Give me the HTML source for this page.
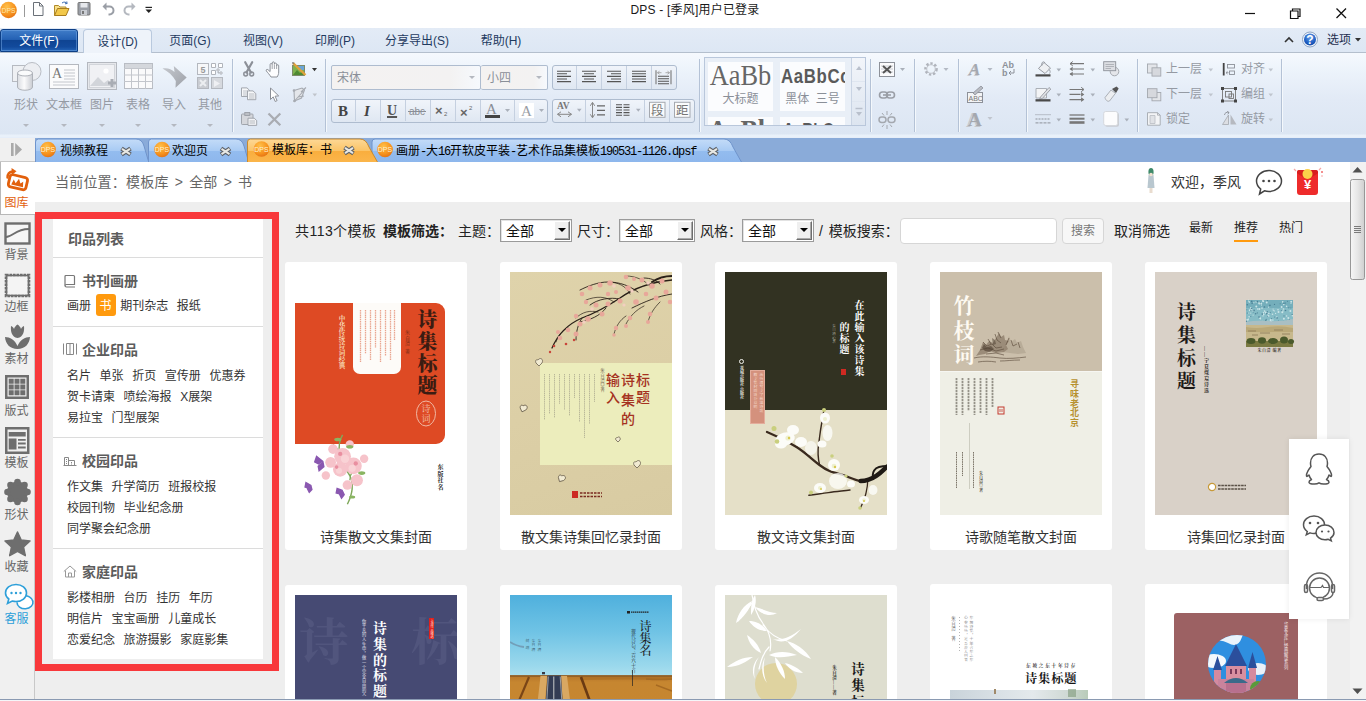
<!DOCTYPE html>
<html lang="zh-CN">
<head>
<meta charset="utf-8">
<title>DPS</title>
<style>
*{box-sizing:border-box;margin:0;padding:0}
html,body{width:1366px;height:701px;overflow:hidden;background:#fff}
body{font-family:"Liberation Sans","Noto Sans CJK SC",sans-serif;font-size:13px;color:#222;position:relative}
.abs{position:absolute}
svg{display:block;overflow:visible}
i{font-style:normal}
/* title bar */
#title{position:absolute;left:0;top:0;width:1366px;height:28px;background:#fff}
#title .cap{position:absolute;left:0;width:1390px;top:1px;text-align:center;font-size:12px;letter-spacing:0.200px;line-height:18px;color:#1a1a1a}
/* menu */
#menu{position:absolute;left:0;top:28px;width:1366px;height:25px;background:linear-gradient(#e3ebf6,#dde7f4);border-bottom:1px solid #b4bfcd}
#menu .mi{position:absolute;top:0;height:24px;line-height:27px;font-size:12px;color:#1f3a5f;text-align:center}
#menu .file{left:0;top:1px;width:78px;height:23px;background:linear-gradient(#3f7cc8,#2461b4 45%,#0f4492 50%,#124a9c 80%,#2363b6);color:#fff;border:1px solid #0d3f86;box-shadow:inset 0 0 0 1px rgba(120,170,230,0.500);border-radius:3px 3px 0 0;line-height:22px}
#menu .act{left:83px;top:1px;width:69px;height:25px;background:#eef3fa;border:1px solid #b9c9de;border-bottom:none;border-radius:4px 4px 0 0;line-height:25px;color:#1f3a5f}
/* ribbon */
#ribbon{position:absolute;left:0;top:53px;width:1366px;height:84px;background:linear-gradient(#f5f9fe 0,#ebf2fa 25%,#e2eaf6 55%,#dce6f3 96%,#e9f1fa 98%)}
.sep{position:absolute;top:6px;width:1px;height:73px;background:#b4c2d6;box-shadow:1px 0 0 #f4f8fc}
.big{position:absolute;top:0;width:42px;height:84px}
.big .bi{position:absolute}
.big span{position:absolute;left:-6px;width:54px;top:43px;text-align:center;font-size:12px;line-height:18px;color:#959aa3;white-space:nowrap}
.big i{position:absolute;left:18px;top:71px;width:0;height:0;border:3px solid transparent;border-top:3px solid #b4b8c0;border-bottom:none}
.combo{position:absolute;height:25px;border:1px solid #aebccf;background:linear-gradient(90deg,#f4f2f1 0%,#f3f2f2 80%,#f6f9fd 100%);border-radius:2px}
.combo b{position:absolute;top:0;font-weight:normal;font-size:12px;line-height:24px;color:#8a8f98}
.combo .dd{position:absolute;top:10px;width:0;height:0;border:3px solid transparent;border-top:3px solid #b4b8c0;border-bottom:none}
.grp{position:absolute;height:24px;border:1px solid #aebccf;border-radius:3px;background:linear-gradient(#f0f4fa,#dfe7f2);overflow:hidden}
.grp svg{position:absolute;left:-1px;top:-1px}
.gallery{position:absolute;border:1px solid #b9c7db;background:#e9eff7;overflow:hidden}
.gi{position:absolute;top:4px;height:49px;background:#fbfcfe;overflow:hidden}
.gi2{position:absolute;height:20px;background:#fbfcfe}
.gi em,.gi2 em{position:absolute;left:0;right:0;text-align:center;font-style:normal;color:#666;line-height:30px;white-space:nowrap;overflow:hidden}
.gi u{position:absolute;left:0;right:0;top:28px;text-align:center;text-decoration:none;font-size:12px;line-height:18px;color:#8a8f98;white-space:nowrap}
.gs{position:absolute;right:0;top:0;width:14px;height:67px;background:linear-gradient(#f2f5fa,#dde5f0);border-left:1px solid #c9d4e4}
.rt{position:absolute;font-size:12px;line-height:18px;color:#959aa3;white-space:nowrap}
/* doc tabs */
#tabs{position:absolute;left:0;top:137px;width:1366px;height:25px;background:#8aabd9}
.tt{position:absolute;top:6px;font-size:12px;line-height:18px;color:#000;white-space:nowrap;font-family:"Liberation Mono","Noto Sans CJK SC",monospace}
.tt i{font-size:12px;letter-spacing:-1.200px}
/* sidebar */
#side{position:absolute;left:0;top:162px;width:35px;height:538px;background:#f0f0f0;border-right:1px solid #c8c8c8}
.sact{position:absolute;left:0;top:0;width:36px;height:53px;background:#fff;border:1px solid #b8b8b8;border-right:none;border-top:none}
.sl{position:absolute;left:-1px;width:35px;text-align:center;font-size:12px;line-height:18px;color:#666;white-space:nowrap}
/* content */
#content{position:absolute;left:35px;top:162px;width:1315px;height:538px;background:#eee;overflow:hidden}
#chead{position:absolute;left:0;top:0;width:1315px;height:40px;background:#fff}
.crumb{position:absolute;left:20px;top:10px;font-size:14px;line-height:20px;color:#666;letter-spacing:0.200px;word-spacing:2px}
.welcome{position:absolute;left:1136px;top:10px;font-size:14px;line-height:20px;color:#333}
#redbox{position:absolute;left:0;top:50px;width:244px;height:459px;border:7px solid #f8383b}
#lpanel{position:absolute;left:18px;top:58px;width:210px;height:439px;background:#fff;box-shadow:0 -1px 0 #fff}
.lh{position:absolute;left:15px;top:11px;font-size:14px;font-weight:bold;line-height:20px;color:#5c5c5c}
.ld{position:absolute;left:0;width:210px;height:1px;background:#dcdcdc}
.lt{position:absolute;left:29px;font-size:14px;font-weight:bold;line-height:20px;color:#5c5c5c}
.lr{position:absolute;left:10px;height:22px;white-space:nowrap;font-size:0}
.lr a{display:inline-block;height:22px;line-height:25px;padding:0 4px;margin-right:0.600px;font-size:12px;color:#333;border-radius:3px;vertical-align:top}
.lr a.on{background:#ff9a0e;color:#fff}
.fb{position:absolute;top:59px;font-size:14px;line-height:20px;color:#222;white-space:nowrap}
.sel{position:absolute;top:57px;width:72px;height:23px;border:1px solid #9a9a9a;background:#fff;box-shadow:inset 1px 1px 0 #e2e2e2}
.sel span{position:absolute;left:5px;top:1px;font-size:14px;line-height:20px;color:#111}
.sel i{position:absolute;right:1px;top:1px;width:16px;height:19px;background:#efefef;border:1px solid;border-color:#fff #6d6d6d #6d6d6d #fff;box-shadow:inset -1px -1px 0 #a8a8a8}
.sel i:after{content:"";position:absolute;left:3px;top:6px;border:4px solid transparent;border-top:4px solid #000;border-bottom:none}
.sinput{position:absolute;left:865px;top:56px;width:157px;height:26px;border:1px solid #d6d6d6;border-radius:4px;background:#fff}
.sbtn{position:absolute;left:1027px;top:56px;width:42px;height:26px;border:1px solid #d6d6d6;border-radius:4px;background:#f7f7f7;font-size:12px;line-height:25px;text-align:center;color:#777}
.fs{position:absolute;top:57px;font-size:12px;line-height:18px;color:#222;white-space:nowrap}
.fs b{position:absolute;left:0;right:0;top:21px;height:2px;background:#ff9a0e}
.card{position:absolute;width:182px;height:288px;background:#fff;border-radius:3px;overflow:hidden}
.cv{position:absolute;left:10px;top:10px;width:162px;height:243px;overflow:hidden}
.cap2{position:absolute;left:0;width:182px;top:265px;text-align:center;font-size:14px;line-height:20px;color:#333;white-space:nowrap}
.v{position:absolute;writing-mode:vertical-rl;white-space:nowrap;line-height:1}
.sf{font-family:"Liberation Serif","Noto Serif CJK SC",serif}
#float{position:absolute;left:1289px;top:439px;width:60px;height:180px;background:#fff;box-shadow:0 0 6px rgba(0,0,0,0.08)}
#scroll{position:absolute;left:1350px;top:162px;width:16px;height:538px;background:#f2f2f2}
#bottom{position:absolute;left:0;top:699px;width:1366px;height:2px;background:#f4f6f9;border-top:1px solid #8a9ab2}
</style>
</head>
<body>
<div id="title"><div class="cap">DPS - [季风]用户已登录</div>
  <svg class="abs" style="left:0;top:0" width="160" height="22" viewBox="0 0 160 22">
    <defs><radialGradient id="dg" cx="0.4" cy="0.3" r="0.8"><stop offset="0" stop-color="#ffc04a"/><stop offset="0.6" stop-color="#f7931e"/><stop offset="1" stop-color="#e06a10"/></radialGradient></defs>
    <circle cx="8.500" cy="10" r="8.300" fill="url(#dg)"/><text x="8.500" y="13" text-anchor="middle" font-family="Liberation Sans,sans-serif" font-size="6.800" fill="#ffe7ae">DPS</text>
    <path d="M24.500 5v12" stroke="#999"/>
    <path d="M33.500 2.500h6l3.500 3.500v9.500h-9.500z" fill="#fdfdfd" stroke="#6a7078"/><path d="M39.500 2.500v3.500h3.500" fill="none" stroke="#6a7078"/>
    <path d="M54.500 15.500v-10h4l1.500 1.500h6v2" fill="#f8e08a" stroke="#b08a2a"/><path d="M54.500 15.500l3-7h11.500l-3 7z" fill="#f2c84a" stroke="#a87c1e"/><path d="M62 3c2-1.500 4-1 5 0.500M67 3.500l-0.200-2M67 3.500l-2 0.300" stroke="#3a6ab0" fill="none"/>
    <rect x="78" y="2.500" width="12" height="12.500" rx="1" fill="#9a9ea6" stroke="#777"/><rect x="80.500" y="3" width="7" height="4.500" fill="#e6e8ec"/><rect x="81" y="10" width="6" height="5" fill="#c9ccd2"/><rect x="82" y="11" width="2" height="3" fill="#777"/>
    <path d="M104.500 6.500h5a3.500 3.500 0 0 1 0 8h-1" fill="none" stroke="#9a9ea6" stroke-width="2"/><path d="M102.500 6.500l4-4v8z" fill="#9a9ea6"/>
    <path d="M133.500 6.500h-5a3.500 3.500 0 0 0 0 8h1" fill="none" stroke="#b4b8bf" stroke-width="2"/><path d="M135.500 6.500l-4-4v8z" fill="#b4b8bf"/>
    <path d="M145.500 6.800h6.500v1.200h-6.500z" fill="#222"/><path d="M145.500 9.600h6.500l-3.250 3.500z" fill="#222"/>
  </svg>
  <svg class="abs" style="left:1240px;top:4px" width="120" height="20" viewBox="0 0 120 20"><g fill="none" stroke="#111" stroke-width="1.200"><path d="M5 9.500h10"/><path d="M50.500 7h7.500v7.500h-7.500zM52.500 7v-2h7.500v7.500h-2"/><path d="M96.500 4.500l9.500 9.500M106 4.500l-9.500 9.500" stroke-width="1.300"/></g></svg>
</div>
<div id="menu">
  <div class="mi file">文件(F)</div>
  <div class="mi act">设计(D)</div>
  <div class="mi" style="left:158px;width:64px">页面(G)</div>
  <div class="mi" style="left:231px;width:64px">视图(V)</div>
  <div class="mi" style="left:303px;width:64px">印刷(P)</div>
  <div class="mi" style="left:374px;width:86px">分享导出(S)</div>
  <div class="mi" style="left:469px;width:64px">帮助(H)</div>
  <svg class="abs" style="left:1280px;top:2px" width="86" height="20" viewBox="0 0 86 20">
    <defs><radialGradient id="hg" cx="0.5" cy="0.3" r="0.8"><stop offset="0" stop-color="#6aa0e8"/><stop offset="0.6" stop-color="#1f5fc4"/><stop offset="1" stop-color="#123f98"/></radialGradient></defs>
    <path d="M5 12l4-4 4 4" fill="none" stroke="#333" stroke-width="1.600"/>
    <circle cx="30" cy="9.500" r="7.500" fill="#f4f7fb" stroke="#8ea4c4"/><circle cx="30" cy="9.500" r="6" fill="url(#hg)"/><text x="30" y="14" text-anchor="middle" font-family="Liberation Sans,sans-serif" font-weight="bold" font-size="12" fill="#fff">?</text>
    <path d="M75 8h6l-3 3.500z" fill="#333"/>
  </svg>
  <div class="mi" style="left:1323px;width:32px;top:-1px;font-size:12px;color:#1f2f4f">选项</div>
</div>
<div id="ribbon">
  <!-- big buttons -->
  <div class="big" style="left:5px"><svg class="bi" width="30" height="29" viewBox="0 0 30 29" style="left:7px;top:9px"><defs><linearGradient id="cg" x1="0" y1="0" x2="1" y2="0"><stop offset="0" stop-color="#d9dce1"/><stop offset="0.450" stop-color="#fbfbfc"/><stop offset="1" stop-color="#c9ccd2"/></linearGradient></defs><rect x="0.500" y="3.500" width="16" height="16" fill="#eef0f3" stroke="#b6bac1"/><circle cx="20" cy="9.500" r="9" fill="#eceef2" stroke="#b9bdc4"/><path d="M5.500 11v14c0 4.300 15 4.300 15 0V11" fill="url(#cg)" stroke="#aeb2b9"/><ellipse cx="13" cy="11" rx="7.500" ry="3" fill="#fafbfc" stroke="#aeb2b9"/></svg><span>形状</span><i></i></div>
  <div class="big" style="left:43px"><svg class="bi" width="30" height="25" viewBox="0 0 30 25" style="left:6px;top:11px"><rect x="0.5" y="0.5" width="29" height="24" fill="#fbfbfc" stroke="#b4b8bf"/><text x="3" y="14" font-family="Liberation Serif,serif" font-size="14" fill="#777">A</text><path d="M15 6h11M15 9h11M15 12h11M15 15h11M4 18h22M4 21h22" stroke="#c3c6cc" stroke-width="1"/></svg><span>文本框</span><i></i></div>
  <div class="big" style="left:81px"><svg class="bi" width="30" height="28" viewBox="0 0 30 28" style="left:6px;top:9px"><rect x="0.5" y="0.5" width="29" height="27" fill="#e6e8ec" stroke="#b4b8bf"/><rect x="2.5" y="2.5" width="25" height="23" fill="#f0f1f4" stroke="#d2d5da"/><circle cx="19" cy="9" r="2.6" fill="#fff"/><path d="M3 24l8-9 6 6 4-3 6 6z" fill="#d2d5da"/><path d="M21 21h8M25 17v8" stroke="#a9adb4" stroke-width="3"/></svg><span>图片</span><i></i></div>
  <div class="big" style="left:117px"><svg class="bi" width="29" height="26" viewBox="0 0 29 26" style="left:7px;top:10px"><rect x="0.5" y="0.5" width="28" height="25" fill="#fafafb" stroke="#b9bdc4"/><rect x="1" y="1" width="27" height="4" fill="#d4d7dc"/><path d="M0 5.5h29M0 12h29M0 18.500h29M7.500 5v21M14.500 5v21M21.500 5v21" stroke="#c3c6cc"/></svg><span>表格</span><i></i></div>
  <div class="big" style="left:153px"><svg class="bi" width="26" height="23" viewBox="0 0 26 23" style="left:9px;top:12px"><defs><linearGradient id="ig" x1="0" y1="0" x2="1" y2="1"><stop offset="0" stop-color="#c6c9cf"/><stop offset="1" stop-color="#9da1a8"/></linearGradient></defs><path d="M0.500 3.500C5 2.500 9.500 4 12.500 7L11.800 1 24.700 12.400 13.500 22.700 13.800 16C11 10.500 6 6.500 0.500 3.500z" fill="url(#ig)"/></svg><span>导入</span><i></i></div>
  <div class="big" style="left:189px"><svg class="bi" width="26" height="27" viewBox="0 0 26 27" style="left:8px;top:10px"><rect x="0.5" y="0.5" width="11" height="11" fill="#f6f7f9" stroke="#b4b8bf"/><text x="3.500" y="9.500" font-family="Liberation Sans,sans-serif" font-size="9" font-weight="bold" fill="#999">5</text><path d="M14.500 0.500h4v4h-4zM21.500 0.500h4v4h-4zM14.500 7.500h4v4h-4zM20 6h2v2h-2zM23 9h2v2h-2zM21 9h1v1h-1z" fill="#fff" stroke="#b0b4bb"/><rect x="0.5" y="14.500" width="11" height="11" fill="#c9ccd2" stroke="#b4b8bf"/><path d="M3 17l6 6M9 17l-6 6" stroke="#eceef1" stroke-width="2"/><rect x="14.500" y="14.500" width="11" height="11" fill="#d6d9de" stroke="#b4b8bf"/><path d="M17 17l6 3.500-6 3.500z" fill="#eff0f3"/></svg><span>其他</span><i></i></div>
  <div class="sep" style="left:232px"></div>
  <!-- small edit icons -->
  <svg class="abs" style="left:240px;top:8px" width="80" height="70" viewBox="0 0 80 70">
    <g fill="none" stroke="#8c9098" stroke-linecap="round"><path d="M5.200 1.200L11 11.500M12.200 1.200L6.400 11.500" stroke-width="2.200"/><circle cx="5.700" cy="13" r="1.900" stroke-width="1.500"/><circle cx="11.700" cy="13" r="1.900" stroke-width="1.500"/></g>
    <path d="M31 16c-1.500-2.500-3.600-4.600-4.600-6-0.800-1.200 0.600-2.200 1.700-1.200l2 1.800V3.600c0-1.500 2.100-1.500 2.100 0V2c0-1.600 2.200-1.600 2.200 0v1.200c0-1.500 2.200-1.500 2.200 0v1.600c0-1.500 2.100-1.500 2.100 0V11c0 2.200-0.700 3.600-1.600 5z" fill="#fdfdfe" stroke="#8c9098" stroke-width="1" stroke-linejoin="round"/><path d="M32.200 4v4M34.400 3.500V8M36.600 4.500V8" stroke="#8c9098" stroke-width="0.800"/>
    <g><rect x="52.500" y="4.500" width="12" height="10" fill="#7fb24e" stroke="#7d8a6a"/><rect x="58" y="5" width="6" height="4" fill="#6aa6d8"/><path d="M53 14l4-5 3 3 2-1.500 2 3.500z" fill="#4f8a32"/><path d="M53 2l12.500 12" stroke="#e0a13a" stroke-width="2.400"/><path d="M52 1l2.500 0.800-1.600 1.700z" fill="#777"/><path d="M72 7h5l-2.500 3.200z" fill="#333"/></g>
    <g stroke="#9a9ea6" stroke-width="0.900"><path d="M1.500 26.900h5.500l2.500 2.400v6.200h-8z" fill="#f6f7f9"/><path d="M3 30h5M3 32h5M3 34h5" stroke="#b9bcc3" fill="none"/><path d="M7.500 29.900h5.500l2.800 2.600v6.200h-8.300z" fill="#f6f7f9"/><path d="M9 33h5.500M9 35h5.500M9 37h5.500" stroke="#b2b5bc" fill="none"/></g>
    <path d="M30.500 27v11.500l2.700-2.600 2 4.600 1.900-0.900-2-4.400 3.600-0.300z" fill="#fff" stroke="#8c9098" stroke-width="1" stroke-linejoin="round"/>
    <g fill="none" stroke="#a6aab1" stroke-width="1.100"><path d="M54 29.500l8-2.500 2.500 2-3 8-7 3z" fill="#e4e6ea"/><path d="M54.500 40l9-10M61 31l5-4.500M58 36l6-1" /><circle cx="54" cy="29.500" r="0.800" fill="#a6aab1"/><circle cx="54.500" cy="40" r="0.800" fill="#a6aab1"/><path d="M72.500 32.500h4.600l-2.300 3z" fill="#c0c4cb" stroke="none"/></g>
    <g stroke="#9a9ea6" stroke-width="0.900"><rect x="1.500" y="53" width="11.500" height="10.500" rx="0.800" fill="#d5d7dc"/><rect x="4.800" y="51.500" width="5" height="3" fill="#bcbfc5"/><path d="M8 57.200h6.200l2.500 2.300v4.900h-8.700z" fill="#f1f2f5"/><path d="M9.500 60h5.500M9.500 62h5.500" stroke="#b2b5bc" fill="none"/></g>
    <path d="M28.500 52.500l11.800 11.800M40.300 52.500L28.500 64.300" stroke="#a9acb2" stroke-width="2.300" fill="none"/>
  </svg>
  <div class="sep" style="left:325px"></div>

  <!-- font combos -->
  <div class="combo" style="left:331px;top:12px;width:150px"><b style="left:5px">宋体</b><i class="dd" style="right:5px"></i></div>
  <div class="combo" style="left:481px;top:12px;width:67px;border-left:none"><b style="left:6px">小四</b><i class="dd" style="right:5px"></i></div>
  <div class="grp" style="left:552px;top:12px;width:125px;height:25px">
    <svg width="125" height="25" viewBox="0 0 125 25"><g stroke="#555" stroke-width="1.100" fill="none" transform="translate(0,-1.300)">
      <path d="M5 7.500h14M5 10.100h10M5 12.700h14M5 15.300h10M5 17.900h14"/>
      <path d="M30 7.500h14M32 10.100h10M30 12.700h14M32 15.300h10M30 17.900h14"/>
      <path d="M55 7.500h14M59 10.100h10M55 12.700h14M59 15.300h10M55 17.900h14"/>
      <path d="M80 7.500h14M80 10.100h14M80 12.700h14M80 15.300h14M80 17.900h14"/>
      <path d="M104 6.500v14M119 6.500v14" stroke="#777"/><path d="M105.500 9h4M113.500 9h4M105.500 9l2-1.500M105.500 9l2 1.500M117.500 9l-2-1.500M117.500 9l-2 1.500" stroke="#999" stroke-width="0.800"/><path d="M106 12.500h11M106 15h11M106 17.500h11M106 20h11"/>
    </g><path d="M24.500 1v23M49.500 1v23M74.500 1v23M99.500 1v23" stroke="#c5d0e0"/></svg>
  </div>
  <div class="grp" style="left:331px;top:46px;width:217px">
    <svg width="217" height="23" viewBox="0 0 217 23"><path d="M24.500 1v21M49.500 1v21M74.500 1v21M99.500 1v21M124.500 1v21M149.500 1v21M183.500 1v21" stroke="#c5d0e0"/>
      <text x="7" y="17" font-family="Liberation Serif,serif" font-weight="bold" font-size="15" fill="#444">B</text>
      <text x="33" y="17" font-family="Liberation Serif,serif" font-style="italic" font-weight="bold" font-size="15" fill="#444">I</text>
      <text x="56" y="16" font-family="Liberation Serif,serif" font-weight="bold" font-size="14" fill="#555" text-decoration="underline">U</text><path d="M56 18.500h10" stroke="#555"/>
      <text x="78" y="16" font-family="Liberation Sans,sans-serif" font-size="10" fill="#8a8e96">abc</text><path d="M77 12.500h18" stroke="#8a8e96"/>
      <text x="104" y="16" font-family="Liberation Sans,sans-serif" font-weight="bold" font-size="13" fill="#666">×</text><text x="113" y="17" font-family="Liberation Sans,sans-serif" font-size="6" fill="#666">2</text>
      <text x="129" y="18" font-family="Liberation Sans,sans-serif" font-weight="bold" font-size="13" fill="#666">×</text><text x="138" y="11" font-family="Liberation Sans,sans-serif" font-size="6" fill="#666">2</text>
      <text x="155" y="15" font-family="Liberation Serif,serif" font-size="15" fill="#8a8e96">A</text><rect x="154" y="16" width="15" height="3" fill="#444"/><path d="M174 10h5l-2.500 3z" fill="#aab0ba"/>
      <rect x="188" y="4" width="15" height="15" fill="#fff"/><text x="190" y="17" font-family="Liberation Serif,serif" font-size="15" fill="#9a9ea6">A</text><path d="M208 10h5l-2.500 3z" fill="#aab0ba"/>
    </svg>
  </div>
  <div class="grp" style="left:552px;top:46px;width:143px">
    <svg width="143" height="24" viewBox="0 0 143 24"><path d="M33.500 1v22M58.500 1v22M92.500 1v22M117.500 1v22" stroke="#c5d0e0"/><g transform="translate(0,-1.200)">
      <text x="5" y="11.500" font-family="Liberation Serif,serif" font-weight="bold" font-size="9.500" fill="#777">AV</text><path d="M5.500 16.500h14M5.500 16.500l3.500-2.500M5.500 16.500l3.500 2.500M19.500 16.500l-3.500-2.500M19.500 16.500l-3.500 2.500" stroke="#888" fill="none"/><path d="M25 11h4.600l-2.300 3z" fill="#aab0ba"/>
      <path d="M40.500 5v14.500M40.500 4.500l-2.200 3.500M40.500 4.500l2.200 3.500M40.500 20l-2.200-3.500M40.500 20l2.200-3.500" stroke="#888" fill="none"/><path d="M45 8h8M45 12.500h8M45 17h8" stroke="#666" stroke-width="1.200"/>
      <path d="M64 7h6M64 9.600h6M64 12.200h6M64 14.800h6M64 17.400h6M71.500 7h6M71.500 9.600h6M71.500 12.200h6M71.500 14.800h6M71.500 17.400h6" stroke="#555" stroke-width="1.100"/><path d="M84 11h4.600l-2.300 3z" fill="#aab0ba"/>
      <rect x="97.500" y="4.500" width="15.500" height="15" fill="#fafbfc" stroke="#a4a8af"/><text x="99" y="17" font-size="12.500" fill="#777" font-family="Noto Sans CJK SC,sans-serif">段</text>
      <rect x="122.500" y="4.500" width="15.500" height="15" fill="#fafbfc" stroke="#a4a8af"/><text x="124" y="17" font-size="12.500" fill="#777" font-family="Noto Sans CJK SC,sans-serif">距</text></g>
    </svg>
  </div>
  <div class="sep" style="left:699px"></div>
  <!-- style gallery -->
  <div class="gallery" style="left:704px;top:4px;width:162px;height:69px">
    <div class="gi" style="left:3px;width:65px"><em style="font-family:'Liberation Serif',serif;font-size:30px;top:-5px;line-height:36px;left:-12px;right:-12px;transform:scaleX(0.880)">AaBb</em><u>大标题</u></div>
    <div class="gi" style="left:75px;width:65px"><em style="font-family:'Liberation Sans',sans-serif;font-weight:bold;font-size:21px;top:-1px;letter-spacing:0.800px;text-align:left;left:1px;right:auto;width:100px;transform-origin:0 50%;transform:scaleX(0.800);color:#5a5a5a;overflow:visible">AaBbCc</em><u>黑体&nbsp;&nbsp;三号</u></div>
    <div class="gi2" style="left:3px;width:65px;top:59px"><em style="font-family:'Liberation Serif',serif;font-weight:bold;font-size:30px;top:-5px;line-height:36px;left:-12px;right:-12px;transform:scaleX(0.880)">AaBb</em></div>
    <div class="gi2" style="left:75px;width:65px;top:59px"><em style="font-family:'Liberation Sans',sans-serif;font-weight:bold;font-size:19px;top:-2px;left:-10px;right:-10px;transform:scaleX(0.800);color:#5a5a5a">AaBbCc</em></div>
    <div class="gs"><svg width="14" height="67" viewBox="0 0 14 67"><path d="M4 12h6l-3-4zM4 29h6l-3 4zM4 54h6l-3 4z" fill="#b9c0cc"/><path d="M3.500 50.500h7" stroke="#b9c0cc" stroke-width="1.500"/><path d="M0 23.500h14M0 43.500h14" stroke="#dfe6f0"/></svg></div>
  </div>
  <div class="sep" style="left:870px"></div>
  <div class="sep" style="left:914px"></div>
  <div class="sep" style="left:958px"></div>
  <div class="sep" style="left:1026px"></div>
  <div class="sep" style="left:1137px"></div>
  <div class="sep" style="left:1281px"></div>

  <!-- link group -->
  <svg class="abs" style="left:876px;top:6px" width="36" height="74" viewBox="0 0 36 74">
    <rect x="3.500" y="3.500" width="15" height="14" fill="#fbfbfc" stroke="#8d9199"/><path d="M5 7h12M5 10h12M5 13h12" stroke="#c8cbd1"/><path d="M7 7l8 7M15 7l-8 7" stroke="#555" stroke-width="2"/><path d="M24 9h5l-2.500 3z" fill="#aab0ba"/>
    <g fill="none" stroke="#9a9ea6" stroke-width="1.600"><rect x="3.500" y="33" width="8" height="6" rx="3"/><rect x="10.500" y="33" width="8" height="6" rx="3"/><path d="M7 36h8"/></g>
    <g fill="none" stroke="#a4a8af" stroke-width="1.500"><rect x="3" y="58" width="7" height="5.500" rx="2.700"/><rect x="12" y="58" width="7" height="5.500" rx="2.700"/><path d="M11 52v4M11 66v4M6 54l2 2.500M16 54l-2 2.500M6 68l2-2.500M16 68l-2-2.500" stroke-width="1"/></g>
  </svg>
  <!-- gear -->
  <svg class="abs" style="left:922px;top:8px" width="30" height="18" viewBox="0 0 30 18"><circle cx="9" cy="8" r="5.500" fill="none" stroke="#b0b4bc" stroke-width="2.600" stroke-dasharray="2.300 1.800"/><circle cx="9" cy="8" r="4.300" fill="none" stroke="#c0c4cb" stroke-width="1"/><path d="M21.500 7h5l-2.500 3z" fill="#b4bac4"/></svg>
  <!-- text effects -->
  <svg class="abs" style="left:964px;top:6px" width="58" height="74" viewBox="0 0 58 74">
    <text x="4" y="17" font-family="Liberation Serif,serif" font-style="italic" font-weight="bold" font-size="17" fill="#c9ccd2">A</text><text x="5" y="16" font-family="Liberation Serif,serif" font-style="italic" font-weight="bold" font-size="17" fill="#a4a8af">A</text><path d="M23.500 9h5l-2.500 3z" fill="#b4bac4"/>
    <text x="38" y="9" font-family="Liberation Sans,sans-serif" font-weight="bold" font-size="9" fill="#8d9199">Ab</text><text x="38" y="17" font-family="Liberation Sans,sans-serif" font-weight="bold" font-size="9" fill="#8d9199">b</text><path d="M50 10v4h-5M45 14l2-2M45 14l2 2" stroke="#8d9199" fill="none"/>
    <rect x="3.500" y="33.500" width="15" height="10" fill="#f3f4f6" stroke="#8d9199"/><text x="4.500" y="42" font-family="Liberation Sans,sans-serif" font-size="7" fill="#777">ABC</text><path d="M9 34l8-7 2 2-8 7z" fill="#b9bcc3" stroke="#8d9199" stroke-width="0.800"/>
    <text x="2" y="68" font-family="Liberation Serif,serif" font-weight="bold" font-size="20" fill="#c4c7cd">A</text><text x="4" y="67" font-family="Liberation Serif,serif" font-weight="bold" font-size="19" fill="#a4a8af">A</text><path d="M23.500 58h5l-2.500 3z" fill="#c0c5ce"/>
  </svg>
  <!-- fill / line group -->
  <svg class="abs" style="left:1032px;top:6px" width="100" height="74" viewBox="0 0 100 74">
    <g><path d="M6.500 9.500l5.500-6 6.500 5.500-5.500 5.500z" fill="#eef0f3" stroke="#8d9199" stroke-width="0.900"/><path d="M10 6.500c-1-3 1.500-5 3-2.500" stroke="#8d9199" fill="none" stroke-width="0.900"/><path d="M16.500 10c1.800 1.200 2.200 3 1 4.500" stroke="#a4a8af" fill="none"/><rect x="3.500" y="15.300" width="15" height="2.200" fill="#4a4a4a"/><path d="M24.500 9.500h4.600l-2.300 3z" fill="#aab0ba"/></g>
    <g><path d="M4 29.500h10.500v9.500H4z" fill="#f3f4f6" stroke="#a4a8af" stroke-width="0.900"/><path d="M8.500 38l8.500-9.500 1.800 1.600-8.500 9.400-2.600 0.800z" fill="#dfe1e5" stroke="#8d9199" stroke-width="0.800"/><rect x="3.500" y="40.200" width="15" height="2.300" fill="#4a4a4a"/><path d="M24.500 34.500h4.600l-2.300 3z" fill="#aab0ba"/></g>
    <g stroke="#8d9199" fill="none"><path d="M3.500 55.700h15" stroke-dasharray="1 1"/><path d="M3.500 60h15" stroke-dasharray="2 1"/><path d="M3.500 63.900h15" stroke-dasharray="3 1"/><path d="M24.500 59.500h4.600l-2.300 3z" fill="#aab0ba" stroke="none"/></g>
    <g stroke="#777" stroke-width="1.200" fill="none"><path d="M38 4.700h14M41 10h11M38 15h14"/><path d="M38 4.700l2.800-2.200M38 4.700l2.800 2.200" stroke-width="1"/><path d="M37.500 10l3.200-2.300v4.600zM37.500 15l3.200-2.300v4.600z" fill="#777" stroke="none"/><path d="M58.500 9.500h4.600l-2.300 3z" fill="#aab0ba" stroke="none"/></g>
    <g stroke="#777" stroke-width="1.200" fill="none"><path d="M37.500 30.500h14M37.500 35.400h11M37.500 40.600h14"/><path d="M52 30.500l-2.800-2.200M52 30.500l-2.800 2.200" stroke-width="1"/><path d="M52.300 35.400l-3.200-2.300v4.600zM52.300 40.600l-3.200-2.300v4.600z" fill="#777" stroke="none"/><path d="M58.500 34.500h4.600l-2.300 3z" fill="#aab0ba" stroke="none"/></g>
    <g><path d="M37.500 56h15" stroke="#777" stroke-width="1.300"/><path d="M37.500 59.700h15" stroke="#777" stroke-width="2"/><path d="M37.500 63.500h15" stroke="#777" stroke-width="2.600"/><path d="M58.500 59.500h4.600l-2.300 3z" fill="#aab0ba"/></g>
    <g><circle cx="82.500" cy="12.500" r="4.300" fill="#e4e6ea" stroke="#a4a8af"/><rect x="71.700" y="2.700" width="12" height="9" fill="#dcdee3" stroke="#8d9199" stroke-width="0.900"/><path d="M73.500 5.500h8.500M73.500 7.500h8.500M73.500 9.500h5.500" stroke="#a4a8af" stroke-width="0.800"/></g>
    <g><path d="M73 38.500l6-7.500 4.500 3.300-6 7.700c-2 1-4-1-4.500-3.500z" fill="#eceef1" stroke="#a4a8af" stroke-width="0.900"/><path d="M80 30l4.500-2.500 2.200 2-2.700 4.500z" fill="#555"/></g>
    <g><rect x="73" y="53.800" width="14" height="14" rx="2" fill="#c9ccd2"/><rect x="71.700" y="52.500" width="14" height="14" rx="2" fill="#fcfcfd" stroke="#d5d8dd"/><path d="M92.500 59.500h4.600l-2.300 3z" fill="#aab0ba"/></g>
  </svg>
  <!-- arrange group -->
  <svg class="abs" style="left:1144px;top:6px" width="136" height="74" viewBox="0 0 136 74">
    <g stroke="#a4a8af" stroke-width="0.900"><rect x="3.500" y="5" width="9.500" height="9" fill="#e3e5e9"/><rect x="8" y="8.800" width="8.800" height="8.300" fill="#d6d8dd"/></g>
    <g stroke="#a4a8af" stroke-width="0.900"><rect x="8" y="33.500" width="8.800" height="8.300" fill="#e3e5e9"/><rect x="3.500" y="29.700" width="9.500" height="9" fill="#d6d8dd"/></g>
    <g><path d="M3.500 53.700h10l2.700 2.500v10h-12.700z" fill="#f3f4f6" stroke="#a4a8af" stroke-width="0.900"/><path d="M6 56.500h5v8h-5z" fill="#e0e2e6" stroke="#b9bcc3" stroke-width="0.800"/><path d="M13.500 53.700v2.500h2.700" fill="none" stroke="#a4a8af" stroke-width="0.800"/></g>
    <path d="M79.700 4v12.500" stroke="#444" stroke-width="1.800"/><g fill="none" stroke="#8d9199" stroke-width="0.900"><rect x="83.500" y="5.500" width="7" height="3.500"/><rect x="85.500" y="12" width="5" height="3.500"/><path d="M84.500 13.700h-2.500M82 13.700l1.500-1.300M82 13.700l1.500 1.300"/></g>
    <g fill="none" stroke="#777" stroke-width="0.900"><rect x="78.500" y="29.500" width="13" height="12.500"/><rect x="81.500" y="32.500" width="6" height="5.500"/><rect x="85" y="35" width="4.500" height="4.500"/></g><path d="M77 28h3v3h-3zM90 28h3v3h-3zM77 40.500h3v3h-3zM90 40.500h3v3h-3z" fill="#444"/>
    <g><path d="M78.500 65.500h6V56z" fill="#dcdee3" stroke="#a4a8af" stroke-width="0.800"/><path d="M86.500 65.500h6l-6-10z" fill="#b6b9c0"/><path d="M80.500 56c0-2.200 2.500-3.300 4.500-2.500M85 53.500l-1.800-1.200M85 53.500l-1.200 1.800" stroke="#8d9199" fill="none" stroke-width="0.900"/></g>
    <g fill="#c0c5ce"><path d="M64.500 9.500h4.600l-2.300 3zM64.500 34.500h4.600l-2.300 3zM124.500 9.500h4.600l-2.300 3zM124.500 34.500h4.600l-2.300 3zM124.500 59.500h4.600l-2.300 3z"/></g>
  </svg>
  <div class="rt" style="left:1166px;top:7px">上一层</div>
  <div class="rt" style="left:1166px;top:32px">下一层</div>
  <div class="rt" style="left:1166px;top:57px">锁定</div>
  <div class="rt" style="left:1241px;top:7px">对齐</div>
  <div class="rt" style="left:1241px;top:32px">编组</div>
  <div class="rt" style="left:1241px;top:57px">旋转</div>
</div>
<div id="tabs">
  <svg class="abs" style="left:0;top:0" width="1366" height="25" viewBox="0 0 1366 25">
    <defs>
      <linearGradient id="tb" x1="0" y1="0" x2="0" y2="1"><stop offset="0" stop-color="#c4dcf8"/><stop offset="0.48" stop-color="#a9cbf4"/><stop offset="0.52" stop-color="#93bcef"/><stop offset="1" stop-color="#8db6ec"/></linearGradient>
      <linearGradient id="to" x1="0" y1="0" x2="0" y2="1"><stop offset="0" stop-color="#fdd896"/><stop offset="0.48" stop-color="#fbc468"/><stop offset="0.52" stop-color="#f9ae3e"/><stop offset="1" stop-color="#fbb64c"/></linearGradient>
      <radialGradient id="dg2" cx="0.4" cy="0.3" r="0.8"><stop offset="0" stop-color="#ffc04a"/><stop offset="0.6" stop-color="#f7931e"/><stop offset="1" stop-color="#e06a10"/></radialGradient>
      <g id="dps"><circle cx="0" cy="0" r="7.800" fill="url(#dg2)"/><text x="0" y="2.600" text-anchor="middle" font-family="Liberation Sans,sans-serif" font-size="7" fill="#fff0d0">DPS</text></g>
      <g id="cx"><path d="M-4.500 -3l9 6M4.500 -3l-9 6" stroke="#5c6066" stroke-width="4.400" stroke-linecap="butt"/><path d="M-4 -2.700l8 5.400M4 -2.700l-8 5.400" stroke="#e8e8e4" stroke-width="2"/></g>
    </defs>
    <rect x="0" y="0" width="35" height="25" fill="#f0f0f0"/><path d="M0 0.500h1366" stroke="#e6eef9"/>
    <path d="M12.300 6v13" stroke="#a9a9a9" stroke-width="2.600"/><path d="M15.200 6l6.800 6.500-6.800 6.500z" fill="#a9a9a9"/>
    <path d="M732 24.500V1.500h-354v23z" fill="none"/>
    <g transform="translate(0,1)"><path d="M372 25V4q0-3 3-3H724q6 0 9 8l9 16z" fill="url(#tb)" stroke="#6f94cc" stroke-width="1"/>
    <path d="M35.500 25V4q0-3 3-3H136q6 0 8 7l5 17z" fill="url(#tb)" stroke="#6f94cc"/>
    <path d="M148.500 25V4q0-3 3-3H236q6 0 8 7l5 17z" fill="url(#tb)" stroke="#6f94cc"/>
    <path d="M247.500 25V4q0-3 3-3H360q6 0 9 8l9 16z" fill="url(#to)" stroke="#c98a2e"/></g>
    <path d="M0 24.500h35" stroke="#c8c8c8"/>
    <use href="#dps" x="48" y="12.500"/><use href="#dps" x="162" y="12.500"/><use href="#dps" x="261.500" y="12"/><use href="#dps" x="385" y="12.500"/>
    <use href="#cx" x="126" y="14.500"/><use href="#cx" x="225.500" y="14.500"/><use href="#cx" x="349" y="13.500"/><use href="#cx" x="713" y="14.500"/>
  </svg>
  <span class="tt" style="left:60px">视频教程</span>
  <span class="tt" style="left:172px">欢迎页</span>
  <span class="tt" style="left:272px;top:5px">模板库：书</span>
  <span class="tt" style="left:396px">画册<i>-</i>大<i>16</i>开软皮平装<i>-</i>艺术作品集模板<i>190531-1126.dpsf</i></span>
</div>
<div id="side">
  <div class="sact"></div>
  <svg class="abs" style="left:0;top:0" width="35" height="460" viewBox="0 0 35 460">
    <!-- tuku -->
    <g transform="translate(18,20) rotate(13)"><rect x="-9" y="-6" width="18" height="12.500" rx="2.800" fill="#fff" stroke="#e2600c" stroke-width="2.800"/><path d="M-6 4l1.300-5.500 2.700 3.200 2.300-5 2.400 4.200 2.300-2.400 1 5.500z" fill="#e2600c"/></g>
    <path d="M7.500 15.500c0-3.500 2-5.500 5-6" stroke="#e2600c" stroke-width="2.400" fill="none" stroke-linecap="round"/><path d="M11.500 6l5 3.300-4.600 3.600z" fill="#e2600c"/>
    <!-- beijing -->
    <g transform="translate(4,60)"><rect x="1.500" y="1.500" width="24" height="20" fill="#f6f6f6" stroke="#6e6e6e" stroke-width="2.400"/><path d="M2 15c7 0 9-8 23-8" fill="none" stroke="#6e6e6e" stroke-width="1.800"/></g>
    <!-- biankuang -->
    <g transform="translate(4,111)"><rect x="2" y="2" width="23" height="21" fill="#f4f4f4" stroke="#6e6e6e" stroke-width="2.600" stroke-dasharray="2.600 0.900"/><rect x="2.500" y="2.500" width="22" height="20" fill="none" stroke="#6e6e6e" stroke-width="1.600"/></g>
    <!-- sucai -->
    <g transform="translate(4,162)" fill="#6e6e6e"><path d="M7 2c1.500 0.500 2.500 1.500 3 3 0.500-2 2-3.500 3.500-4.500 1.500 1 3 2.500 3.500 4.500 0.500-1.500 1.500-2.500 3-3 0.500 5-0.500 11-6.500 12C7.500 13 6.500 7 7 2z"/><path d="M13.500 25C6 25 1.500 20 1 13c5 0 10 3 12.500 9C16 16 21 13 26 13c-0.500 7-5 12-12.500 12z"/></g>
    <!-- banshi -->
    <g transform="translate(5,213)"><rect x="1.250" y="1.250" width="21.500" height="21.500" fill="#efefef" stroke="#6e6e6e" stroke-width="2.500"/><path d="M3.700 3.700h5v5h-5zM9.500 3.700h5v5h-5zM15.300 3.700h5v5h-5zM3.700 9.500h5v5h-5zM9.500 9.500h5v5h-5zM15.300 9.500h5v5h-5zM3.700 15.300h5v5h-5zM9.500 15.300h5v5h-5zM15.300 15.300h5v5h-5z" fill="#6e6e6e"/></g>
    <!-- muban -->
    <g transform="translate(5,265)"><rect x="1.250" y="1.250" width="22" height="24.500" fill="#efefef" stroke="#6e6e6e" stroke-width="2.500"/><rect x="3.700" y="5" width="17" height="4.500" fill="#6e6e6e"/><rect x="3.700" y="11.500" width="7.800" height="11" fill="#6e6e6e"/><path d="M13 12.800h7.700M13 16.500h7.700M13 20.500h7.700" stroke="#6e6e6e" stroke-width="1.800"/></g>
    <!-- xingzhuang -->
    <g transform="translate(17.500,330)" fill="#6e6e6e"><circle r="10.500"/><circle cx="0" cy="-10" r="3.300"/><circle cx="7" cy="-7" r="3.300"/><circle cx="10" cy="0" r="3.300"/><circle cx="7" cy="7" r="3.300"/><circle cx="0" cy="10" r="3.300"/><circle cx="-7" cy="7" r="3.300"/><circle cx="-10" cy="0" r="3.300"/><circle cx="-7" cy="-7" r="3.300"/></g>
    <!-- shoucang -->
    <path transform="translate(17.500,382.500)" d="M0 -12.500l3.700 8 8.800 1-6.500 6 1.800 8.700L0 6.800l-7.800 4.400 1.800-8.700-6.500-6 8.800-1z" fill="#6e6e6e" stroke="#6e6e6e" stroke-width="1.500" stroke-linejoin="round"/>
    <!-- kefu -->
    <g transform="translate(4,421)" fill="#fff" stroke="#2d9fd9" stroke-width="1.600"><path d="M19 13a8 6.500 0 1 1-6 6.200"/><path d="M12 1.500c6 0 10.500 3.800 10.500 8.500s-4.500 8.500-10.500 8.500c-1.300 0-2.600-0.200-3.800-0.500L3.500 20.500l1.300-4.500C2.800 14.500 1.500 12.400 1.500 10c0-4.700 4.500-8.500 10.500-8.500z"/><g fill="#2d9fd9" stroke="none"><circle cx="7.500" cy="10" r="1.200"/><circle cx="12" cy="10" r="1.200"/><circle cx="16.500" cy="10" r="1.200"/></g></g>
  </svg>
  <span class="sl" style="top:32px;color:#e2600c">图库</span>
  <span class="sl" style="top:84px">背景</span>
  <span class="sl" style="top:136px">边框</span>
  <span class="sl" style="top:188px">素材</span>
  <span class="sl" style="top:240px">版式</span>
  <span class="sl" style="top:292px">模板</span>
  <span class="sl" style="top:344px">形状</span>
  <span class="sl" style="top:396px">收藏</span>
  <span class="sl" style="top:448px;color:#2d9fd9">客服</span>
</div>
<div id="content">
  <div id="chead">
    <div class="crumb">当前位置：模板库 &gt; 全部 &gt; 书</div>
    <svg class="abs" style="left:1108px;top:3px" width="16" height="30" viewBox="0 0 16 30"><ellipse cx="8" cy="7" rx="2.600" ry="4" fill="#3f8a6a"/><path d="M5.500 10h5l1 13h-7z" fill="#b9c7cf"/><path d="M6.500 23h3v5h-3z" fill="#e9dccf"/><circle cx="8" cy="9.500" r="1.800" fill="#f3e1d0"/></svg>
    <div class="welcome">欢迎，季风</div>
    <svg class="abs" style="left:1220px;top:7px" width="28" height="27" viewBox="0 0 28 27"><path d="M14 1.500c6.900 0 12.500 4.700 12.500 10.500S20.900 22.500 14 22.500c-1.600 0-3.100-0.200-4.500-0.700L4.500 25l1.200-5C3.100 18 1.500 15.200 1.500 12 1.500 6.200 7.100 1.500 14 1.500z" fill="#fff" stroke="#444" stroke-width="1.500"/><circle cx="8.500" cy="12" r="1.300" fill="#444"/><circle cx="14" cy="12" r="1.300" fill="#444"/><circle cx="19.500" cy="12" r="1.300" fill="#444"/></svg>
    <svg class="abs" style="left:1256px;top:3px" width="36" height="32" viewBox="0 0 36 32"><rect x="6" y="5" width="21" height="25" rx="3" fill="#ee2b2b"/><path d="M6 8q10.500 9 21 0V7q0-2-2-2H8q-2 0-2 2z" fill="#d81e1e"/><circle cx="16.500" cy="9" r="5" fill="#fbd04a"/><text x="16.500" y="24" text-anchor="middle" font-family="Liberation Sans,sans-serif" font-weight="bold" font-size="13" fill="#fff">¥</text><path d="M3 4l2 2M30 3l-2 2M32 11h-2" stroke="#f7a6a6" stroke-width="1.200"/><circle cx="31" cy="7" r="1" fill="#f06a6a"/></svg>
  </div>
  <!-- left panel -->
  <div id="redbox"></div>
  <div id="lpanel">
    <div class="lh" style="top:9px">印品列表</div>
    <div class="ld" style="top:37px"></div>
    <svg class="abs" style="left:10px;top:54px" width="14" height="14" viewBox="0 0 14 14"><path d="M2.500 1.500h8q1 0 1 1v8h-8q-1.500 0-1.500 1.200t1.500 1.300h8.500" fill="none" stroke="#777" stroke-width="1.200"/><path d="M2 11.500v-9q0-1 1-1" fill="none" stroke="#777" stroke-width="1.200"/></svg>
    <div class="lt" style="top:51px">书刊画册</div>
    <div class="lr" style="top:74px"><a>画册</a><a class="on">书</a><a>期刊杂志</a><a>报纸</a></div>
    <div class="ld" style="top:106px"></div>
    <svg class="abs" style="left:9px;top:122px" width="16" height="14" viewBox="0 0 16 14"><path d="M1.500 1.500v11M4.500 1.500h7v11h-7zM14.500 1.500v11M8 1.500v11" fill="none" stroke="#888" stroke-width="1"/></svg>
    <div class="lt" style="top:120px">企业印品</div>
    <div class="lr" style="top:144px"><a>名片</a><a>单张</a><a>折页</a><a>宣传册</a><a>优惠券</a></div>
    <div class="lr" style="top:165px"><a>贺卡请柬</a><a>喷绘海报</a><a>X展架</a></div>
    <div class="lr" style="top:186px"><a>易拉宝</a><a>门型展架</a></div>
    <div class="ld" style="top:217px"></div>
    <svg class="abs" style="left:10px;top:234px" width="14" height="13" viewBox="0 0 14 13"><path d="M1.500 11.500v-8h4v8M5.500 6.500h6v5M0.500 11.500h13M3 5.500h1M3 7.500h1M3 9.500h1M8 8.500h1M8 10h1" fill="none" stroke="#888" stroke-width="1"/></svg>
    <div class="lt" style="top:231px">校园印品</div>
    <div class="lr" style="top:255px"><a>作文集</a><a>升学简历</a><a>班报校报</a></div>
    <div class="lr" style="top:276px"><a>校园刊物</a><a>毕业纪念册</a></div>
    <div class="lr" style="top:297px"><a>同学聚会纪念册</a></div>
    <div class="ld" style="top:328px"></div>
    <svg class="abs" style="left:10px;top:345px" width="14" height="13" viewBox="0 0 14 13"><path d="M0.800 6.500l6.200-5.500 6.200 5.500M2.500 5.500v6.500h9v-6.500M5.500 12v-4h3v4" fill="none" stroke="#999" stroke-width="1"/></svg>
    <div class="lt" style="top:342px">家庭印品</div>
    <div class="lr" style="top:366px"><a>影楼相册</a><a>台历</a><a>挂历</a><a>年历</a></div>
    <div class="lr" style="top:387px"><a>明信片</a><a>宝宝画册</a><a>儿童成长</a></div>
    <div class="lr" style="top:408px"><a>恋爱纪念</a><a>旅游摄影</a><a>家庭影集</a></div>
  </div>
  <!-- filter bar -->
  <div class="fb" style="left:260px;letter-spacing:0.450px">共113个模板</div>
  <div class="fb" style="left:348px;font-weight:bold;color:#222">模板筛选：</div>
  <div class="fb" style="left:423px">主题：</div>
  <div class="sel" style="left:465px"><span>全部</span><i></i></div>
  <div class="fb" style="left:542px">尺寸：</div>
  <div class="sel" style="left:584px;width:76px"><span>全部</span><i></i></div>
  <div class="fb" style="left:665px">风格：</div>
  <div class="sel" style="left:707px"><span>全部</span><i></i></div>
  <div class="fb" style="left:784px;word-spacing:2px">/ 模板搜索：</div>
  <div class="sinput"></div>
  <div class="sbtn">搜索</div>
  <div class="fb" style="left:1079px">取消筛选</div>
  <div class="fs" style="left:1154px">最新</div>
  <div class="fs" style="left:1199px">推荐<b></b></div>
  <div class="fs" style="left:1244px">热门</div>
  <!--CARDS_START-->
  <!-- card 1 -->
  <div class="card" style="left:250px;top:100px">
    <div class="cv" style="background:#fff">
      <div class="abs" style="left:0;top:31px;width:150px;height:141px;background:#de4a24;border-radius:0 9px 9px 0"></div>
      <div class="abs" style="left:58px;top:31px;width:48px;height:71px;background:#fdfbf8;border-radius:0 0 7px 7px"></div>
      <svg class="abs" style="left:62px;top:36px" width="40" height="60" viewBox="0 0 40 60"><path d="M3.500 2v52M8.500 2v44M13.500 2v50M18.500 2v38M23.500 2v52M28.500 2v46M33.500 2v50M37.500 2v30" stroke="#e9a58f" stroke-width="1.300" stroke-dasharray="1.500 0.700"/></svg>
      <div class="v sf" style="left:120px;top:37px;font-size:20px;font-weight:900;color:#3b1c12;line-height:21px;letter-spacing:2.300px">诗集标题</div>
      <div class="v sf" style="left:109px;top:58px;font-size:5px;color:#7a2a16;letter-spacing:0.500px">朱自清 著</div>
      <svg class="abs" style="left:120px;top:128px" width="22" height="27" viewBox="0 0 22 27"><ellipse cx="11" cy="13.500" rx="9.500" ry="12.500" fill="none" stroke="#f0b9a4" stroke-width="1"/><text x="11" y="12" text-anchor="middle" font-family="Noto Serif CJK SC,serif" font-size="9" fill="#f3c4b0">诗</text><text x="11" y="22" text-anchor="middle" font-family="Noto Serif CJK SC,serif" font-size="9" fill="#f3c4b0">词</text></svg>
      <div class="v sf" style="left:43px;top:43px;font-size:6.500px;font-weight:bold;color:#f6d9b4;letter-spacing:0.300px">中华传统诗词经典</div>
      <svg class="abs" style="left:2px;top:158px" width="84" height="79" viewBox="0 0 70 66">
        <path d="M38 4c-6 10-2 22 6 34 4 8 2 16-2 24" fill="none" stroke="#7fa85a" stroke-width="1.200"/><path d="M30 12c4 4 8 8 10 14M52 30c-4 2-8 6-8 12" fill="none" stroke="#7fa85a"/>
        <g fill="#f6c3ca"><circle cx="24" cy="38" r="3.500"/><circle cx="56" cy="24" r="3.500"/><circle cx="44" cy="12" r="3.500"/><circle cx="38" cy="22" r="7"/><circle cx="47" cy="30" r="7"/><circle cx="36" cy="33" r="6"/><circle cx="30" cy="16" r="4"/><circle cx="50" cy="42" r="5"/><circle cx="28" cy="27" r="4.500"/><circle cx="42" cy="46" r="4"/></g>
        <g fill="#f9d3d6"><circle cx="40" cy="24" r="3.500"/><circle cx="46" cy="32" r="3"/><circle cx="35" cy="34" r="2.500"/></g>
        <g fill="#e98fa0"><circle cx="36" cy="20" r="1.800"/><circle cx="49" cy="28" r="1.800"/><circle cx="33" cy="31" r="1.500"/></g>
        <g fill="#8a58b0"><path d="M22 26l-6-5-2 6 4 2zM22 26l-5 4 1 5 5-4z"/><path d="M12 46l-5-3-1 5 3 1zM12 46l-4 3 2 4 3-3z"/><path d="M38 50l-5-2-1 5 4 1zM38 50l-3 4 2 4 3-4z"/></g>
        <g fill="#8ab562"><ellipse cx="34" cy="8" rx="3" ry="1.500"/><ellipse cx="44" cy="14" rx="3" ry="1.500"/><ellipse cx="54" cy="36" rx="3" ry="1.500"/><ellipse cx="46" cy="56" rx="2.500" ry="1.300"/></g>
      </svg>
      <div class="v sf" style="left:142px;top:192px;font-size:6px;font-weight:bold;color:#222;letter-spacing:0.500px">东版社名</div>
    </div>
    <div class="cap2">诗集散文文集封面</div>
  </div>
  <!-- card 2 -->
  <div class="card" style="left:465px;top:100px">
    <div class="cv" style="background:linear-gradient(160deg,#dfd3ab,#dccfa6 50%,#d8cba2)">
      <div class="abs" style="left:30px;top:91px;width:132px;height:102px;background:#ecedbc"></div>
      <svg class="abs" style="left:0;top:0" width="162" height="243" viewBox="0 0 162 243">
        <g fill="none" stroke="#2a2018" stroke-linecap="round"><path d="M162 8c-20 2-38 8-52 18-12 8-22 14-38 20-14 6-24 16-30 30" stroke-width="1.300"/><path d="M140 14c-6-6-14-10-24-10M120 22c-4-8-12-12-22-12M104 30c-8-6-18-6-28-2M88 40c-8-2-16 0-22 6M134 34c-8 4-14 10-18 18M150 30c-6 6-10 12-12 20M116 44c-6 4-10 10-12 18M58 56c-6 2-10 8-12 14" stroke-width="0.700"/><path d="M162 22c-14 2-28 8-40 14M128 20c-8-6-18-10-30-10-10 0-20 4-28 8M110 27c-10-2-22 0-30 6M96 36c-6 8-16 12-26 14M72 46c-4 6-6 14-6 22M150 12c-4-4-10-6-16-6" stroke-width="0.900"/><path d="M162 4c-8 0-14 2-20 6" stroke-width="2"/></g>
        <g fill="#e8a79a"><circle cx="116" cy="5" r="2.300"/><circle cx="124" cy="7" r="2"/><circle cx="98" cy="22" r="2.200"/><circle cx="106" cy="20" r="2"/><circle cx="76" cy="30" r="2.200"/><circle cx="66" cy="44" r="2.200"/><circle cx="120" cy="46" r="2.300"/><circle cx="116" cy="54" r="2"/><circle cx="140" cy="42" r="2.300"/><circle cx="138" cy="50" r="2"/><circle cx="106" cy="56" r="2.200"/><circle cx="104" cy="63" r="1.800"/><circle cx="48" cy="60" r="2"/><circle cx="160" cy="30" r="2.300"/><circle cx="136" cy="22" r="2.300"/><circle cx="100" cy="11" r="2.800"/><circle cx="90" cy="13" r="2.500"/><circle cx="80" cy="16" r="2.500"/><circle cx="118" cy="16" r="2.800"/><circle cx="132" cy="8" r="2.500"/><circle cx="142" cy="14" r="2.800"/><circle cx="152" cy="9" r="2.500"/><circle cx="126" cy="30" r="2.800"/><circle cx="110" cy="29" r="2.500"/><circle cx="98" cy="32" r="2.500"/><circle cx="86" cy="33" r="2.500"/><circle cx="92" cy="42" r="2.500"/><circle cx="78" cy="47" r="2.800"/><circle cx="70" cy="52" r="2.500"/><circle cx="66" cy="62" r="2.500"/><circle cx="58" cy="58" r="2.300"/><circle cx="50" cy="66" r="2.300"/><circle cx="146" cy="26" r="2.500"/><circle cx="156" cy="20" r="2.500"/><circle cx="72" cy="22" r="2.300"/></g>
        <g fill="#f3cfc0"><circle cx="104" cy="14" r="1.800"/><circle cx="122" cy="19" r="1.800"/><circle cx="138" cy="11" r="1.800"/><circle cx="82" cy="37" r="1.800"/><circle cx="74" cy="50" r="1.800"/><circle cx="114" cy="33" r="1.600"/></g>
        <g fill="#c9453a"><circle cx="44" cy="74" r="1.300"/><circle cx="56" cy="72" r="1.300"/><circle cx="64" cy="68" r="1.200"/><circle cx="40" cy="80" r="1.200"/></g>
        <g fill="#f1ead2" stroke="#5a5040" stroke-width="0.700"><path d="M28 88c2-3 6-1 4 3l-3 3-3-3c-1-2 0-4 2-3z"/><path d="M12 134c2-3 6-1 4 3l-3 3-3-3c-1-2 0-4 2-3z" transform="rotate(20 13 137)"/><path d="M126 190c2-3 6-1 4 3l-3 3-3-3c-1-2 0-4 2-3z"/><path d="M50 204c2-3 6-1 4 3l-3 3-3-3c-1-2 0-4 2-3z" transform="rotate(30 51 207)"/><path d="M107 166c1.500-2 4-1 3 2l-2 2-2-2c-1-1 0-3 1-2z"/></g>
        <g stroke="#a3a18a" stroke-width="0.700" stroke-dasharray="1.300 0.600"><path d="M34.500 102v46M39.500 102v40M44.500 102v44M49.500 102v30M54.500 102v36M59.500 102v42M64.500 102v24M69.500 102v48M74.500 102v64M79.500 102v50M84.500 102v28"/></g>
        <rect x="62" y="219" width="6" height="7" fill="#cc2a22"/><path d="M70 221h22M70 224.500h22" stroke="#7a2a20" stroke-width="1.300" stroke-dasharray="2.500 1"/>
      </svg>
      <div class="v sf" style="left:89px;top:96px;font-size:4.500px;color:#6a5a48;letter-spacing:0.300px">朱自清◎著</div>
      <div class="v" style="left:124px;top:101px;font-size:14px;font-weight:500;color:#a5321f;line-height:15px;letter-spacing:2.500px">标题</div>
      <div class="v" style="left:109px;top:101px;font-size:14px;font-weight:500;color:#a5321f;line-height:15px;letter-spacing:5.500px">诗集的</div>
      <div class="v" style="left:94px;top:101px;font-size:14px;font-weight:500;color:#a5321f;line-height:15px;letter-spacing:2.500px">输入</div>
    </div>
    <div class="cap2">散文集诗集回忆录封面</div>
  </div>
  <!-- card 3 -->
  <div class="card" style="left:680px;top:100px">
    <div class="cv" style="background:#e5e0c8">
      <div class="abs" style="left:0;top:0;width:162px;height:138px;background:#323222"></div>
      <div class="v sf" style="left:127px;top:28px;font-size:10px;font-weight:bold;color:#fff;line-height:12px;letter-spacing:1.100px">在此输入该诗集</div>
      <div class="v sf" style="left:112px;top:50px;font-size:10px;font-weight:bold;color:#fff;line-height:12px;letter-spacing:1.100px">的标题</div>
      <div class="abs" style="left:116px;top:97px;width:5px;height:6px;background:#cf2a22"></div>
      <div class="v sf" style="left:106px;top:52px;font-size:3.500px;color:#c8c8bc;letter-spacing:0.300px">朱自清 编著</div>
      <div class="abs" style="left:24.500px;top:98px;width:15.500px;height:54px;background:#d4917d;border:1px solid #e4ad9c"></div>
      <div class="v sf" style="left:27px;top:101px;font-size:3.800px;color:#fbe3da;line-height:6px;letter-spacing:0.200px">此处填写文字标题诗歌<br>散文集封面设计说明</div>
      <div class="v sf" style="left:14px;top:94px;font-size:4px;font-weight:bold;color:#f4f4ee;letter-spacing:0.200px">花城出版社出版社</div>
      <div class="abs" style="left:13.500px;top:87px;width:5px;height:5px;border:0.800px solid #f4f4ee;border-radius:50%"></div>
      <svg class="abs" style="left:0;top:0" width="162" height="243" viewBox="0 0 162 243">
        <g fill="none" stroke="#3a2a1e" stroke-linecap="round"><path d="M42 160c10 4 20 9 29.500 15s15 12 23 18 12 7 20 9 14 6 21 7" stroke-width="2.300"/><path d="M94.600 193c-2-8-2-14-0.900-21.500s1.500-12 2.600-18 1.700-10 2.700-16" stroke-width="1.400"/><path d="M125 218c-8 1-14 1.500-21.500 2.600s-13 1.700-19.600 2.700" stroke-width="1.400"/><path d="M142.700 209c0 5-0.800 8-1.800 12.500s-3 9-5.300 14.300" stroke-width="1.300"/><path d="M135.600 209c6 0 11-2 16-5.400s7-6 10.400-9" stroke-width="4.500" stroke="#1f1a15"/><path d="M148 205c-1-5 2-9 6-10s6-1 8-1" stroke-width="2" stroke="#1f1a15"/></g>
        <g fill="#fcfcf8"><ellipse cx="60" cy="167" rx="10" ry="6.500" transform="rotate(-15 60 167)"/><ellipse cx="68" cy="158" rx="6" ry="5"/><ellipse cx="56" cy="172" rx="6" ry="4.500"/><ellipse cx="76" cy="170" rx="6" ry="5"/><ellipse cx="100" cy="146" rx="5" ry="5.500"/><ellipse cx="102.500" cy="161" rx="5" ry="8" opacity="0.850"/><ellipse cx="97" cy="172" rx="4.500" ry="3.500"/><ellipse cx="86" cy="176" rx="6" ry="7" opacity="0.700"/><ellipse cx="109" cy="193" rx="6" ry="6"/><ellipse cx="113" cy="209" rx="9" ry="8" opacity="0.800"/><ellipse cx="95" cy="216" rx="6" ry="5"/><ellipse cx="139" cy="228" rx="5" ry="4"/><ellipse cx="148" cy="218" rx="4.500" ry="5" opacity="0.850"/><ellipse cx="126" cy="212" rx="4" ry="3.500"/></g>
        <g fill="#eef0cf"><circle cx="63" cy="166" r="2.600"/><circle cx="100" cy="147" r="2"/><circle cx="109" cy="194" r="2.300"/><circle cx="95" cy="216" r="2"/><circle cx="139" cy="228" r="1.800"/></g>
        <g fill="#d7c84e"><circle cx="64" cy="166" r="1.200"/><circle cx="110" cy="195" r="1.200"/><circle cx="96" cy="217" r="1"/><circle cx="139" cy="229" r="1"/></g>
        <g fill="#c9cf7e"><circle cx="49" cy="156.500" r="2.500"/><circle cx="52" cy="169.500" r="2.300"/><circle cx="99" cy="138" r="2"/><circle cx="86" cy="220.500" r="2"/><circle cx="107" cy="184" r="1.800"/><circle cx="135" cy="236" r="1.800"/><circle cx="121" cy="204" r="1.600"/></g>
      </svg>
    </div>
    <div class="cap2">散文诗文集封面</div>
  </div>
  <!-- card 4 -->
  <div class="card" style="left:895px;top:100px">
    <div class="cv" style="background:#efefe6">
      <div class="abs" style="left:0;top:0;width:162px;height:99px;background:#cbbfab"></div>
      <div class="v sf" style="left:10px;top:23px;font-size:21px;font-weight:700;color:#fefaf2;line-height:23px;letter-spacing:3.500px">竹枝词</div>
      <svg class="abs" style="left:0;top:0" width="162" height="243" viewBox="0 0 162 243">
        <g opacity="0.900"><path d="M36 84l4-6 3-8 3 3 3-4 4 2 3-5 3-5 2 4 3-2 1 5 4 1-3 4 2 4-4 3-8 1-6-2-5 3-6 1z" fill="#6b5947" opacity="0.550"/><path d="M62 80l4-7 3-9 2 6 4-3 2 4 4-2 2 6 3 6-8 1-8-1z" fill="#8a7a68" opacity="0.300"/><path d="M43 70l4 4 5-2 4 4 6-1M48 67l3 5M55 62l2 6 4 3M58 60l3 6M40 78l8-2 8 3 8-2M46 82l10-1 8 2M66 73l3-7M71 68l2 6 4-2M78 70l2 6M34 86c8-2 18-1 26 0s18 0 26-1M38 90c6-1 12-1 18 0M60 89c6 0 12-1 20-1" fill="none" stroke="#4a392a" stroke-width="0.600"/><path d="M44 72l3 3 4-1 3 3-4 3-5-1-3-3z" fill="#3e2f22" opacity="0.600"/><path d="M52 66l3 2 1 4-3 1z" fill="#3e2f22" opacity="0.500"/></g>
        <path d="M0 99.500h162" stroke="#fff" stroke-width="0.800" opacity="0.600"/>
        <g stroke="#5a554a" stroke-width="1.800" stroke-dasharray="2.200 0.800" opacity="0.600"><path d="M16.500 106v37M22.500 106v37M28.500 106v33M34.500 106v37M40.500 106v35M46.500 106v37M52.500 106v29"/></g>
        <rect x="58" y="135" width="6" height="7" fill="none" stroke="#c43a2e" stroke-width="1"/><path d="M60 137v3M62 137v3" stroke="#c43a2e" stroke-width="0.800"/>
        <path d="M29.500 151v66" stroke="#b5b5a8" stroke-width="0.600"/>
        <g stroke="#6e675a" stroke-width="0.900" stroke-dasharray="1.600 0.700"><path d="M16.500 180v36M22.500 180v24M33.500 180v36"/></g>
      </svg>
      <div class="v" style="left:129px;top:107px;font-size:9px;font-weight:bold;color:#b7912f;line-height:10px;letter-spacing:0.800px">寻味老北京</div>
      <div class="v sf" style="left:38px;top:199px;font-size:4px;font-weight:bold;color:#4a4438;letter-spacing:0.300px">朱自清◎著</div>
    </div>
    <div class="cap2">诗歌随笔散文封面</div>
  </div>
  <!-- card 5 -->
  <div class="card" style="left:1110px;top:100px">
    <div class="cv" style="background:#d9d1c8">
      <div class="v sf" style="left:19px;top:30px;font-size:19px;font-weight:700;color:#1e1a18;line-height:21px;letter-spacing:4.200px">诗集标题</div>
      <div class="v sf" style="left:48px;top:74px;font-size:5px;font-weight:bold;color:#2a2622;letter-spacing:0.900px">——宁夏煤炭诗选</div>
      <svg class="abs" style="left:91px;top:28px" width="47" height="47" viewBox="0 0 47 47">
        <rect width="47" height="47" fill="#86bcc6"/><rect width="47" height="8" fill="#74aebb"/><g fill="#d4eaec" opacity="0.900"><circle cx="15.2" cy="3.5" r="1.0"/><circle cx="2.3" cy="18.9" r="0.6"/><circle cx="17.2" cy="1.3" r="1.0"/><circle cx="10.1" cy="2.0" r="0.8"/><circle cx="3.3" cy="2.1" r="0.8"/><circle cx="2.8" cy="13.0" r="0.6"/><circle cx="29.6" cy="13.4" r="0.6"/><circle cx="27.1" cy="9.1" r="0.6"/><circle cx="2.2" cy="19.7" r="0.8"/><circle cx="19.7" cy="12.4" r="1.0"/><circle cx="14.5" cy="18.8" r="0.6"/><circle cx="4.8" cy="13.1" r="0.6"/><circle cx="17.5" cy="12.6" r="0.6"/><circle cx="26.5" cy="14.2" r="0.8"/><circle cx="32.0" cy="9.8" r="0.8"/><circle cx="21.9" cy="21.2" r="0.8"/><circle cx="14.1" cy="18.3" r="1.0"/><circle cx="36.7" cy="1.9" r="0.8"/><circle cx="24.7" cy="20.1" r="1.0"/><circle cx="21.1" cy="14.0" r="0.6"/><circle cx="5.5" cy="9.6" r="0.8"/><circle cx="7.1" cy="11.2" r="0.6"/><circle cx="45.2" cy="1.8" r="1.0"/><circle cx="26.9" cy="20.1" r="0.8"/><circle cx="16.0" cy="8.1" r="0.8"/><circle cx="27.3" cy="10.5" r="0.6"/><circle cx="44.4" cy="10.9" r="1.0"/><circle cx="3.1" cy="16.8" r="0.8"/><circle cx="30.4" cy="22.8" r="0.8"/><circle cx="13.4" cy="8.9" r="1.0"/><circle cx="16.3" cy="21.6" r="0.8"/><circle cx="7.9" cy="2.7" r="0.6"/><circle cx="10.3" cy="6.6" r="1.0"/><circle cx="11.6" cy="9.0" r="0.8"/><circle cx="3.8" cy="10.3" r="1.0"/><circle cx="13.1" cy="3.1" r="0.8"/><circle cx="40.6" cy="6.4" r="0.8"/><circle cx="46.4" cy="15.7" r="0.8"/><circle cx="45.0" cy="3.5" r="0.6"/><circle cx="7.1" cy="15.1" r="0.6"/><circle cx="22.8" cy="13.5" r="0.8"/><circle cx="13.3" cy="3.4" r="1.0"/><circle cx="17.4" cy="13.0" r="0.6"/><circle cx="32.5" cy="11.9" r="1.0"/><circle cx="30.8" cy="17.0" r="0.8"/><circle cx="42.3" cy="17.9" r="1.0"/><circle cx="37.5" cy="9.0" r="0.8"/><circle cx="18.5" cy="11.1" r="0.8"/><circle cx="2.9" cy="1.5" r="0.6"/><circle cx="20.7" cy="2.5" r="1.0"/><circle cx="2.5" cy="0.0" r="0.6"/><circle cx="25.2" cy="21.8" r="1.0"/><circle cx="1.2" cy="20.1" r="1.0"/><circle cx="17.7" cy="14.6" r="0.8"/><circle cx="28.3" cy="10.9" r="0.6"/><circle cx="39.9" cy="22.8" r="0.8"/><circle cx="22.6" cy="7.2" r="0.6"/><circle cx="4.8" cy="7.9" r="0.8"/><circle cx="22.5" cy="15.9" r="1.0"/><circle cx="1.1" cy="21.9" r="1.0"/><circle cx="17.0" cy="15.9" r="0.6"/><circle cx="35.6" cy="6.9" r="1.0"/><circle cx="40.6" cy="16.0" r="0.8"/><circle cx="24.4" cy="20.9" r="0.8"/><circle cx="36.3" cy="12.2" r="1.0"/><circle cx="15.5" cy="5.1" r="0.6"/><circle cx="37.9" cy="18.8" r="1.0"/><circle cx="37.8" cy="4.6" r="0.8"/><circle cx="16.7" cy="0.7" r="0.6"/><circle cx="37.1" cy="10.9" r="0.6"/></g><g fill="#3c7088" opacity="0.750"><circle cx="32.5" cy="21.0" r="0.6"/><circle cx="38.0" cy="15.9" r="0.6"/><circle cx="44.9" cy="8.0" r="0.5"/><circle cx="4.8" cy="10.3" r="0.6"/><circle cx="9.6" cy="13.7" r="0.8"/><circle cx="39.5" cy="10.5" r="0.8"/><circle cx="16.2" cy="14.1" r="0.8"/><circle cx="5.6" cy="8.5" r="0.8"/><circle cx="35.3" cy="10.5" r="0.5"/><circle cx="20.4" cy="14.0" r="0.5"/><circle cx="37.6" cy="21.4" r="0.6"/><circle cx="21.8" cy="16.4" r="0.5"/><circle cx="34.1" cy="3.7" r="0.5"/><circle cx="1.3" cy="13.0" r="0.6"/><circle cx="37.9" cy="3.2" r="0.8"/><circle cx="46.1" cy="14.5" r="0.6"/><circle cx="7.3" cy="12.1" r="0.5"/><circle cx="0.7" cy="21.4" r="0.8"/><circle cx="4.8" cy="16.5" r="0.5"/><circle cx="20.4" cy="19.2" r="0.5"/><circle cx="1.3" cy="4.7" r="0.8"/><circle cx="11.3" cy="12.9" r="0.6"/><circle cx="25.6" cy="18.4" r="0.5"/><circle cx="42.8" cy="7.8" r="0.6"/><circle cx="31.1" cy="17.9" r="0.8"/><circle cx="19.8" cy="20.2" r="0.8"/><circle cx="6.1" cy="3.3" r="0.8"/><circle cx="0.9" cy="9.7" r="0.5"/><circle cx="28.6" cy="17.1" r="0.5"/><circle cx="8.1" cy="10.4" r="0.8"/><circle cx="5.7" cy="1.4" r="0.8"/><circle cx="24.4" cy="12.2" r="0.5"/><circle cx="41.5" cy="1.3" r="0.5"/><circle cx="13.0" cy="17.0" r="0.8"/><circle cx="21.3" cy="0.6" r="0.5"/><circle cx="20.8" cy="13.5" r="0.8"/><circle cx="28.5" cy="4.4" r="0.6"/><circle cx="21.3" cy="11.7" r="0.6"/><circle cx="23.9" cy="5.4" r="0.8"/><circle cx="41.2" cy="20.7" r="0.6"/><circle cx="43.4" cy="19.6" r="0.5"/><circle cx="39.5" cy="3.0" r="0.5"/><circle cx="18.4" cy="7.0" r="0.8"/><circle cx="11.3" cy="1.6" r="0.8"/><circle cx="14.2" cy="2.7" r="0.5"/></g>
        <path d="M0 22q10-2 22-1t25-2v6H0z" fill="#a9bfc4"/><rect y="25" width="47" height="22" fill="#c7b88c"/><path d="M0 27q10 2 22 0t25 1v4H0z" fill="#b9a878"/><path d="M2 31h8M14 33h10M28 30h9M36 34h8M6 35h6" stroke="#8a7a58" stroke-width="0.800"/><rect y="41" width="47" height="6" fill="#7a7a42"/>
        <g fill="#4a5a2c"><ellipse cx="5" cy="41" rx="4.500" ry="3"/><ellipse cx="16" cy="40.500" rx="4" ry="3.200"/><ellipse cx="27" cy="41" rx="5" ry="3"/><ellipse cx="38" cy="40" rx="4" ry="3.500"/><ellipse cx="45" cy="41.500" rx="3" ry="2.500"/></g>
      </svg>
      <div class="abs sf" style="left:91px;top:76px;width:47px;text-align:center;font-size:4px;font-weight:bold;color:#3a342e;letter-spacing:0.500px;line-height:5px">朱自清 编著</div>
      <svg class="abs" style="left:52px;top:210px" width="42" height="10" viewBox="0 0 42 10"><circle cx="5" cy="5" r="3.600" fill="#fff" stroke="#c79a3a" stroke-width="1.200"/><path d="M11 3.500h28M11 7h28" stroke="#5a5046" stroke-width="1.400" stroke-dasharray="2.600 0.700"/></svg>
    </div>
    <div class="cap2">诗集回忆录封面</div>
  </div>
  <!-- card 6 -->
  <div class="card" style="left:250px;top:423px">
    <div class="cv" style="background:#464a73">
      <div class="abs sf" style="left:4px;top:18px;font-size:50px;font-weight:700;color:#51557d;line-height:60px">诗</div>
      <div class="abs sf" style="left:116px;top:18px;font-size:50px;font-weight:700;color:#51557d;line-height:60px">标</div>
      <div class="v sf" style="left:75px;top:25.500px;font-size:14px;font-weight:700;color:#fff;line-height:16px;letter-spacing:1.700px">诗集的标题</div>
      <div class="v" style="left:66px;top:24px;font-size:4.200px;color:#e4e4ee;letter-spacing:0.400px">你平凡的人生中，做一个完全自由的人</div>
      <div class="abs" style="left:133.800px;top:23px;width:5.500px;height:21px;background:#e0201c"></div>
      <div class="v" style="left:134.500px;top:23.500px;font-size:3.200px;color:#ffd9d0;letter-spacing:0.100px">上海作品精选</div>
    </div>
  </div>
  <!-- card 7 -->
  <div class="card" style="left:465px;top:423px">
    <div class="cv" style="background:linear-gradient(#4fb0dd 0,#6fc3e5 15%,#9ad8ec 29%,#aadfee 33%,#b8772a 33.200%,#c68630 36%,#c8872f 100%)">
      <svg class="abs" style="left:0;top:0" width="162" height="243" viewBox="0 0 162 243">
        <path d="M0 81h162" stroke="#8a5a24" stroke-width="1.400"/>
        <path d="M70 82h92v3q-46-1-92 0z" fill="#a96a22" opacity="0.600"/>
        <path d="M30.500 81h6.500l-3 40h-8zM50.500 81h6.500l5 40h-8z" fill="#d9a862"/>
        <path d="M37.500 80.500h13.500l2.500 40h-19z" fill="#333c54"/><path d="M43.800 81.500v38" stroke="#f0f0ea" stroke-width="0.800"/><path d="M38.300 81.500l-2.300 38M50.200 81.500l2.500 38" stroke="#e0e0da" stroke-width="0.600"/>
        <path d="M19 82l-16 38" stroke="#7a4516" stroke-width="2.200" fill="none"/><path d="M71 82l14 38" stroke="#6a3a12" stroke-width="2.600" fill="none"/>
        <path d="M136 84q14 1 26 0M146 90q8 3 16 6" stroke="#a66a22" stroke-width="1.400" fill="none"/>
        <rect x="32" y="77" width="3" height="2.300" fill="#3a3a44"/>
        <path d="M0 47q6 4 14 5" stroke="#6f93ad" stroke-width="1.800" fill="none" opacity="0.800"/>
        <path d="M122.500 75v16" stroke="#222" stroke-width="0.700"/>
        <rect x="117" y="16" width="3" height="2.500" fill="#222"/><path d="M121 17.200h18" stroke="#222" stroke-width="1.200" stroke-dasharray="1.500 0.500"/>
      </svg>
      <div class="v sf" style="left:127px;top:25px;font-size:12px;font-weight:500;color:#1a1a1a;line-height:13px;letter-spacing:0.300px">诗集名</div>
      <div class="v sf" style="left:120px;top:34px;font-size:4.500px;color:#1a1a1a;letter-spacing:0.400px">现代诗句三百六十首</div>
      <div class="v sf" style="left:14px;top:44px;font-size:3.800px;color:#33505e;line-height:6px;letter-spacing:0.300px">朱自清<br>朱自清<br>何&nbsp;&nbsp;翊</div>
    </div>
  </div>
  <!-- card 8 -->
  <div class="card" style="left:680px;top:423px">
    <div class="cv" style="background:#dedecf">
      <svg class="abs" style="left:0;top:0" width="162" height="243" viewBox="0 0 162 243">
        <circle cx="51" cy="89" r="21" fill="#dfd3a0"/>
        <g fill="none" stroke="#fff" stroke-width="1.200" stroke-linecap="round"><path d="M27 0c2 10 4 20 12 30 6 8 8 16 6 26M27 8c-4 6-10 12-14 18M38 30c6 8 14 14 24 16M44 52c-6 6-8 14-10 22"/></g>
        <g fill="#fff"><path d="M27 6c-2 8-8 16-16 22 2-10 8-18 16-22z"/><path d="M30 12c8 2 16 6 22 6-6 4-16 2-22-6z"/><path d="M24 26c8 0 14 4 18 10-8 0-14-4-18-10z"/><path d="M22 40c6 4 12 10 14 18-8-4-12-10-14-18z"/><path d="M48 44c8 2 18-2 28-10-8 10-18 16-28 10z"/><path d="M62 46c8 2 18 8 24 18-10-4-18-10-24-18z"/><path d="M44 60c8-4 18-4 28 0-10 2-20 4-28 0z"/><path d="M40 62c-2 8-2 18 2 26-6-8-6-18-2-26z"/><path d="M34 62c-4 6-6 14-4 22-4-8-2-16 4-22z"/><path d="M28 62c-6 4-14 10-26 10 8-6 16-10 26-10z"/><path d="M50 62c6 6 10 14 10 22-6-6-10-14-10-22z"/><path d="M60 68c8 2 14 6 18 10-8 0-14-4-18-10z"/><path d="M30 0c2 6 0 14-4 20 0-8 0-14 4-20z"/></g>
      </svg>
      <div class="v sf" style="left:123px;top:67px;font-size:13.500px;font-weight:700;color:#1a1a1a;line-height:16px;letter-spacing:3px">诗集标题</div>
      <div class="v sf" style="left:106px;top:70px;font-size:4.500px;font-weight:bold;color:#3a3a34;letter-spacing:0.500px">朱自清——著</div>
    </div>
  </div>
  <!-- card 9 -->
  <div class="card" style="left:895px;top:422px">
    <div class="cv" style="background:#fff;top:11px">
      <div class="abs sf" style="left:85px;top:76px;font-size:12.300px;font-weight:700;color:#161616;line-height:16px;letter-spacing:0.800px;white-space:nowrap">诗集标题</div>
      <div class="abs sf" style="left:86px;top:68px;font-size:4.600px;font-weight:bold;color:#333;line-height:6px;letter-spacing:1.800px;white-space:nowrap">东坡之东十年诗存</div>
      <div class="v sf" style="left:10px;top:21px;font-size:4.500px;color:#555;letter-spacing:0.300px">朱自清&nbsp;&nbsp;&nbsp;&nbsp;著</div>
      <div class="v sf" style="left:22px;top:21px;font-size:3.800px;color:#777;line-height:5.500px;letter-spacing:0.400px">东坡诗集，十年合东之东<br>心安处处，是吾故人归来</div>
      <svg class="abs" style="left:18px;top:22px" width="3" height="40" viewBox="0 0 3 40"><path d="M1.500 0v36" stroke="#888" stroke-width="0.800" stroke-dasharray="0.800 2.200"/></svg>
      <div class="abs" style="left:10px;top:94.500px;width:138px;height:60px;background:linear-gradient(90deg,#c9d3da,#d7dfe4 30%,#e4e9ec 60%,#cfd9d4 85%,#b9cbb9)"></div>
      <div class="abs" style="left:54px;top:94px;width:2px;height:5px;background:#a08a6a"></div>
      <div class="abs" style="left:128px;top:94px;width:8px;height:8px;background:#7f9a7a;opacity:0.600"></div>
    </div>
  </div>
  <!-- card 10 -->
  <div class="card" style="left:1110px;top:422px">
    <div class="cv" style="background:#fff;top:11px">
      <div class="abs" style="left:19px;top:18px;width:124px;height:230px;background:#9c6163;border-radius:3px 0 0 0"></div>
      <svg class="abs" style="left:53px;top:40px" width="58" height="58" viewBox="0 0 58 58">
        <defs><clipPath id="cc"><circle cx="29" cy="29" r="29"/></clipPath></defs>
        <g clip-path="url(#cc)"><rect width="58" height="58" fill="#2f8fe0"/><path d="M0 10q10-8 20-2t14-6 24 6v-8H0z" fill="#eaf3fb"/><ellipse cx="6" cy="26" rx="12" ry="7" fill="#f4f8fc"/><ellipse cx="50" cy="34" rx="10" ry="6" fill="#e9f1f9"/>
        <path d="M18 58V30l10-4 10 4v28z" fill="#d98fa0"/><path d="M17 31l11-22 11 22z" fill="#2b4f9c"/><path d="M6 58V34h7v24zM41 58V32h7v26z" fill="#d48a9e"/><path d="M5 35l4.500-14 4.500 14zM40 33l4.500-16 4.500 16z" fill="#2b4f9c"/><path d="M10 58V44h36v14z" fill="#c9839c"/><path d="M18 58V48q10-8 20 0v10z" fill="#b8708e"/><path d="M16 48q12-10 24 0z" fill="#3a6a8a"/><path d="M22 34h2v5h-2zM27 34h2v5h-2zM32 34h2v5h-2z" fill="#7a3a5a"/><ellipse cx="50" cy="54" rx="8" ry="8" fill="#5a9a3a"/></g>
      </svg>
      <div class="v" style="left:128px;top:27px;font-size:4.200px;color:#f3e6e6;letter-spacing:0.100px">华夏文库—经典解读系列</div>
    </div>
  </div>
<!--CARDS_END-->
</div>
<div id="scroll">
  <svg class="abs" style="left:0;top:0" width="16" height="538" viewBox="0 0 16 538"><defs><linearGradient id="sg" x1="0" y1="0" x2="1" y2="0"><stop offset="0" stop-color="#f6f6f6"/><stop offset="0.500" stop-color="#e6e6e6"/><stop offset="1" stop-color="#cfcfcf"/></linearGradient></defs><path d="M2.500 10.500h10l-5-5.500z" fill="#505050"/><path d="M2.500 526.500h10l-5 5.500z" fill="#505050"/><rect x="0.500" y="17.500" width="14" height="100" rx="2" fill="url(#sg)" stroke="#979797"/><path d="M4 64.500h7M4 66.500h7M4 68.500h7M4 70.500h7" stroke="#7a7a7a"/></svg>
</div>
<div id="float">
  <svg width="60" height="180" viewBox="0 0 60 180">
    <g fill="none" stroke="#555" stroke-width="1.500" stroke-linejoin="round"><path d="M30 15c-5.500 0-8.500 4-8.500 9 0 1.500 0.200 2.500 0.500 3.500-2 2.500-4.500 6-4.500 9 0 1.500 1 1 2.500-0.500 0.500 2 1.500 3.500 2.500 4.500-1.500 0.800-2.500 1.700-2.500 2.700 0 1.500 3 1.800 5.500 1.800 2 0 3.500-0.500 4.500-1.200 1 0.700 2.500 1.200 4.500 1.200 2.500 0 5.500-0.300 5.500-1.800 0-1-1-1.900-2.500-2.700 1-1 2-2.500 2.500-4.500 1.500 1.500 2.500 2 2.500 0.500 0-3-2.500-6.500-4.500-9 0.300-1 0.500-2 0.500-3.500 0-5-3-9-8.500-9z"/></g>
    <g fill="#fff" stroke="#555" stroke-width="1.500"><path d="M25 77c-6 0-10.500 4-10.500 8.800 0 2.700 1.500 5.100 3.800 6.700l-1 3.300 3.800-1.900c1.200 0.400 2.500 0.600 3.900 0.600 6 0 10.500-4 10.500-8.700S31 77 25 77z"/><path d="M36 86c-5 0-9 3.300-9 7.400s4 7.400 9 7.400c1.100 0 2.200-0.200 3.200-0.500l3.100 1.600-0.800-2.800c2.100-1.300 3.500-3.400 3.500-5.700 0-4.100-4-7.400-9-7.400z"/></g>
    <g fill="#555"><circle cx="21" cy="84" r="1.300"/><circle cx="29" cy="84" r="1.300"/><circle cx="33" cy="92.500" r="1.100"/><circle cx="39.500" cy="92.500" r="1.100"/></g>
    <g fill="none" stroke="#666" stroke-width="1.500"><circle cx="30.500" cy="149" r="10"/><path d="M17.500 150v-3c0-7.500 5.800-13 13-13s13 5.500 13 13v3"/><rect x="15.500" y="145.500" width="3" height="8" rx="1.500"/><rect x="42.500" y="145.500" width="3" height="8" rx="1.500"/><path d="M21 148.500h11l1.500-2 1 2h6" stroke-width="1.200"/><path d="M44 153.500c0 4-4 6.500-10 6.500"/><rect x="28" y="158.500" width="6.500" height="3" rx="1.500" fill="#fff"/></g>
  </svg>
</div>
<div id="bottom"></div>
</body>
</html>
